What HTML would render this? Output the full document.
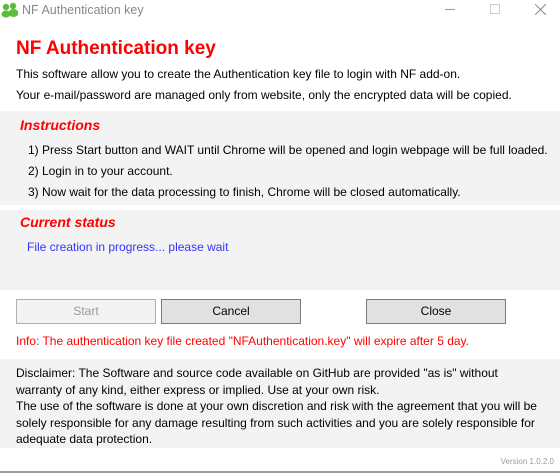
<!DOCTYPE html>
<html><head><meta charset="utf-8"><style>
*{margin:0;padding:0;box-sizing:border-box}
body{width:560px;height:473px;background:#fff;font-family:"Liberation Sans",sans-serif;font-size:12px;color:#000;position:relative;overflow:hidden}
.a{position:absolute;white-space:nowrap}
.panel{position:absolute;left:0;width:560px;background:#f3f3f3}
.h{color:#f00;font-weight:bold;font-style:italic;font-size:14px}
.btn{position:absolute;top:299px;height:25px;border:1px solid #7a7a7a;background:#e1e1e1;text-align:center;line-height:23px;font-size:12px}
</style></head><body>
<svg class="a" style="left:1px;top:2px" width="18" height="16" viewBox="0 0 18 16">
<circle cx="5" cy="5" r="3.2" fill="#5bbd3c"/><circle cx="12" cy="4" r="3.2" fill="#5bbd3c"/>
<ellipse cx="5" cy="12" rx="4.5" ry="3.5" fill="#5bbd3c"/><ellipse cx="12.5" cy="11" rx="4.8" ry="4" fill="#5bbd3c"/>
</svg>
<div class="a" style="left:22px;top:3px;font-size:12.5px;color:#888">NF Authentication key</div>
<div class="a" style="left:445px;top:9px;width:10px;height:1px;background:#999"></div>
<div class="a" style="left:490px;top:4px;width:10px;height:10px;border:1px solid #ccc"></div>
<svg class="a" style="left:535px;top:4px" width="11" height="11"><path d="M0 0L11 11M11 0L0 11" stroke="#888" stroke-width="1"/></svg>
<div class="a" style="left:16px;top:38px;font-size:19px;font-weight:bold;color:#f00">NF Authentication key</div>
<div class="a" style="left:16px;top:67px">This software allow you to create the Authentication key file to login with NF add-on.</div>
<div class="a" style="left:16px;top:88px">Your e-mail/password are managed only from website, only the encrypted data will be copied.</div>
<div class="panel" style="top:111px;height:94px"></div>
<div class="a h" style="left:20px;top:117px">Instructions</div>
<div class="a" style="left:28px;top:143px">1) Press Start button and WAIT until Chrome will be opened and login webpage will be full loaded.</div>
<div class="a" style="left:28px;top:164px">2) Login in to your account.</div>
<div class="a" style="left:28px;top:185px">3) Now wait for the data processing to finish, Chrome will be closed automatically.</div>
<div class="panel" style="top:210px;height:80px"></div>
<div class="a h" style="left:20px;top:214px">Current status</div>
<div class="a" style="left:27px;top:240px;color:#3333ff">File creation in progress... please wait</div>
<div class="btn" style="left:16px;width:140px;background:#f3f3f3;border-color:#b0b0b0;color:#9a9a9a">Start</div>
<div class="btn" style="left:161px;width:140px">Cancel</div>
<div class="btn" style="left:366px;width:140px">Close</div>
<div class="a" style="left:16px;top:334px;color:#f00">Info: The authentication key file created "NFAuthentication.key" will expire after 5 day.</div>
<div class="panel" style="top:359px;height:89px"></div>
<div class="a" style="left:16px;top:365px;line-height:16.5px;white-space:normal;width:540px">Disclaimer: The Software and source code available on GitHub are provided "as is" without<br>warranty of any kind, either express or implied. Use at your own risk.<br>The use of the software is done at your own discretion and risk with the agreement that you will be<br>solely responsible for any damage resulting from such activities and you are solely responsible for<br>adequate data protection.</div>
<div class="a" style="right:6px;top:457px;font-size:8px;color:#999">Version 1.0.2.0</div>
<div class="a" style="left:0;top:471px;width:560px;height:2px;background:#a0a0a0"></div>
</body></html>
